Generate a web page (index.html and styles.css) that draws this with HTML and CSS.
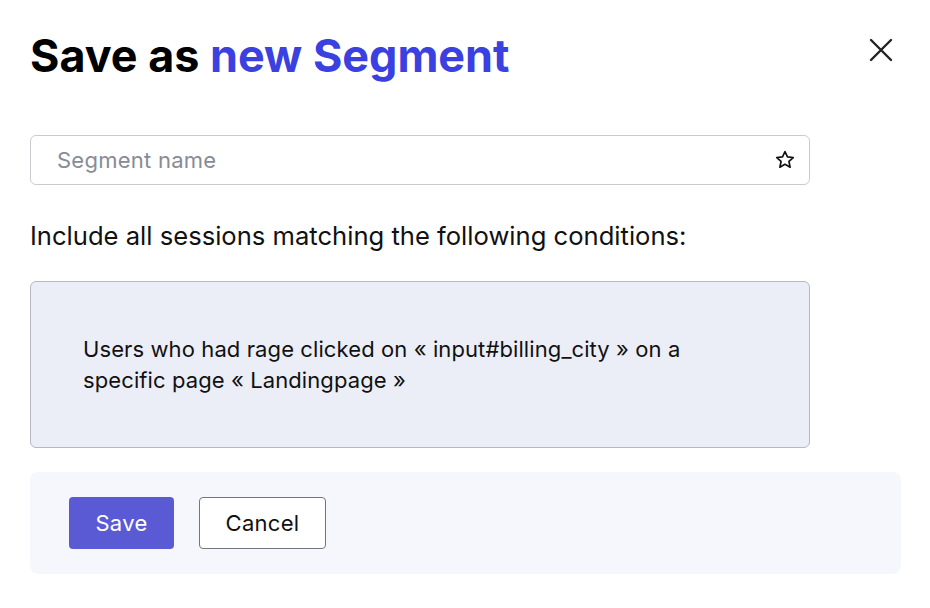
FILE: index.html
```html
<!DOCTYPE html>
<html>
<head>
<meta charset="utf-8">
<link rel="stylesheet" href="styles.css">
</head>
<body>
<div class="dialog">
  <div class="header">
    <h1 class="title">Save as <span class="accent">new Segment</span></h1>
    <button class="close" aria-label="Close">
      <svg width="24" height="24" viewBox="0 0 24 24"><path d="M2 2 L22 22 M22 2 L2 22" stroke="#222" stroke-width="2.4" stroke-linecap="round" fill="none"/></svg>
    </button>
  </div>
  <div class="field">
    <input class="input" type="text" placeholder="Segment name">
    <svg class="star" width="22" height="22" viewBox="0 0 24 24"><path d="M12 2.8 L14.7 8.6 L21 9.3 L16.3 13.6 L17.6 19.9 L12 16.7 L6.4 19.9 L7.7 13.6 L3 9.3 L9.3 8.6 Z" fill="none" stroke="#111" stroke-width="1.8" stroke-linejoin="round"/></svg>
  </div>
  <p class="label">Include all sessions matching the following conditions:</p>
  <div class="conditions">
    <p>Users who had rage clicked on « input#billing_city » on a specific page « Landingpage »</p>
  </div>
  <div class="footer">
    <button class="btn primary">Save</button>
    <button class="btn secondary">Cancel</button>
  </div>
</div>
</body>
</html>
```
FILE: styles.css
```css
* { box-sizing: border-box; }
html, body { margin: 0; padding: 0; background: #fff; }
body { font-family: Inter, "Noto Sans", sans-serif; color: #111; }
.dialog { padding: 22px 29px 0 30px; width: 930px; }
.header { display: flex; justify-content: space-between; align-items: flex-start; }
.title { margin: 0; font-size: 44.9px; font-weight: 700; line-height: 68px; color: #000; }
.accent { color: #3b40e0; }
.close { margin: 16px 8px 0 0; border: none; background: none; padding: 0; width: 24px; height: 24px; display: flex; }
.field { position: relative; width: 780px; margin-top: 45px; }
.input { width: 100%; height: 50px; border: 1px solid #c9cbd0; border-radius: 6px; padding: 0 26px; font-family: inherit; font-size: 22px; letter-spacing: 0.25px; color: #111; outline: none; }
.input::placeholder { color: #868c96; }
.star { position: absolute; right: 14px; top: 14px; }
.label { margin: 36px 0 0; font-size: 25.6px; line-height: 30px; color: #111; }
.conditions { width: 780px; height: 167px; margin-top: 30px; background: #eceef7; border: 1px solid #b6b8c2; border-radius: 6px; padding: 50px 52px; display: flex; align-items: center; }
.conditions p { margin: 0; font-size: 22px; letter-spacing: 0.1px; line-height: 31px; max-width: 650px; color: #111; }
.footer { margin-top: 24px; width: 871px; height: 102px; background: #f6f7fc; border-radius: 8px; padding: 25px 39px; display: flex; gap: 25px; }
.btn { height: 52px; border-radius: 4px; font-family: inherit; font-size: 22px; letter-spacing: 0.3px; padding: 0; }
.primary { width: 105px; background: #5a5bd4; color: #fff; border: none; }
.secondary { width: 127px; background: #fff; color: #111; border: 1px solid #73757d; }
```
